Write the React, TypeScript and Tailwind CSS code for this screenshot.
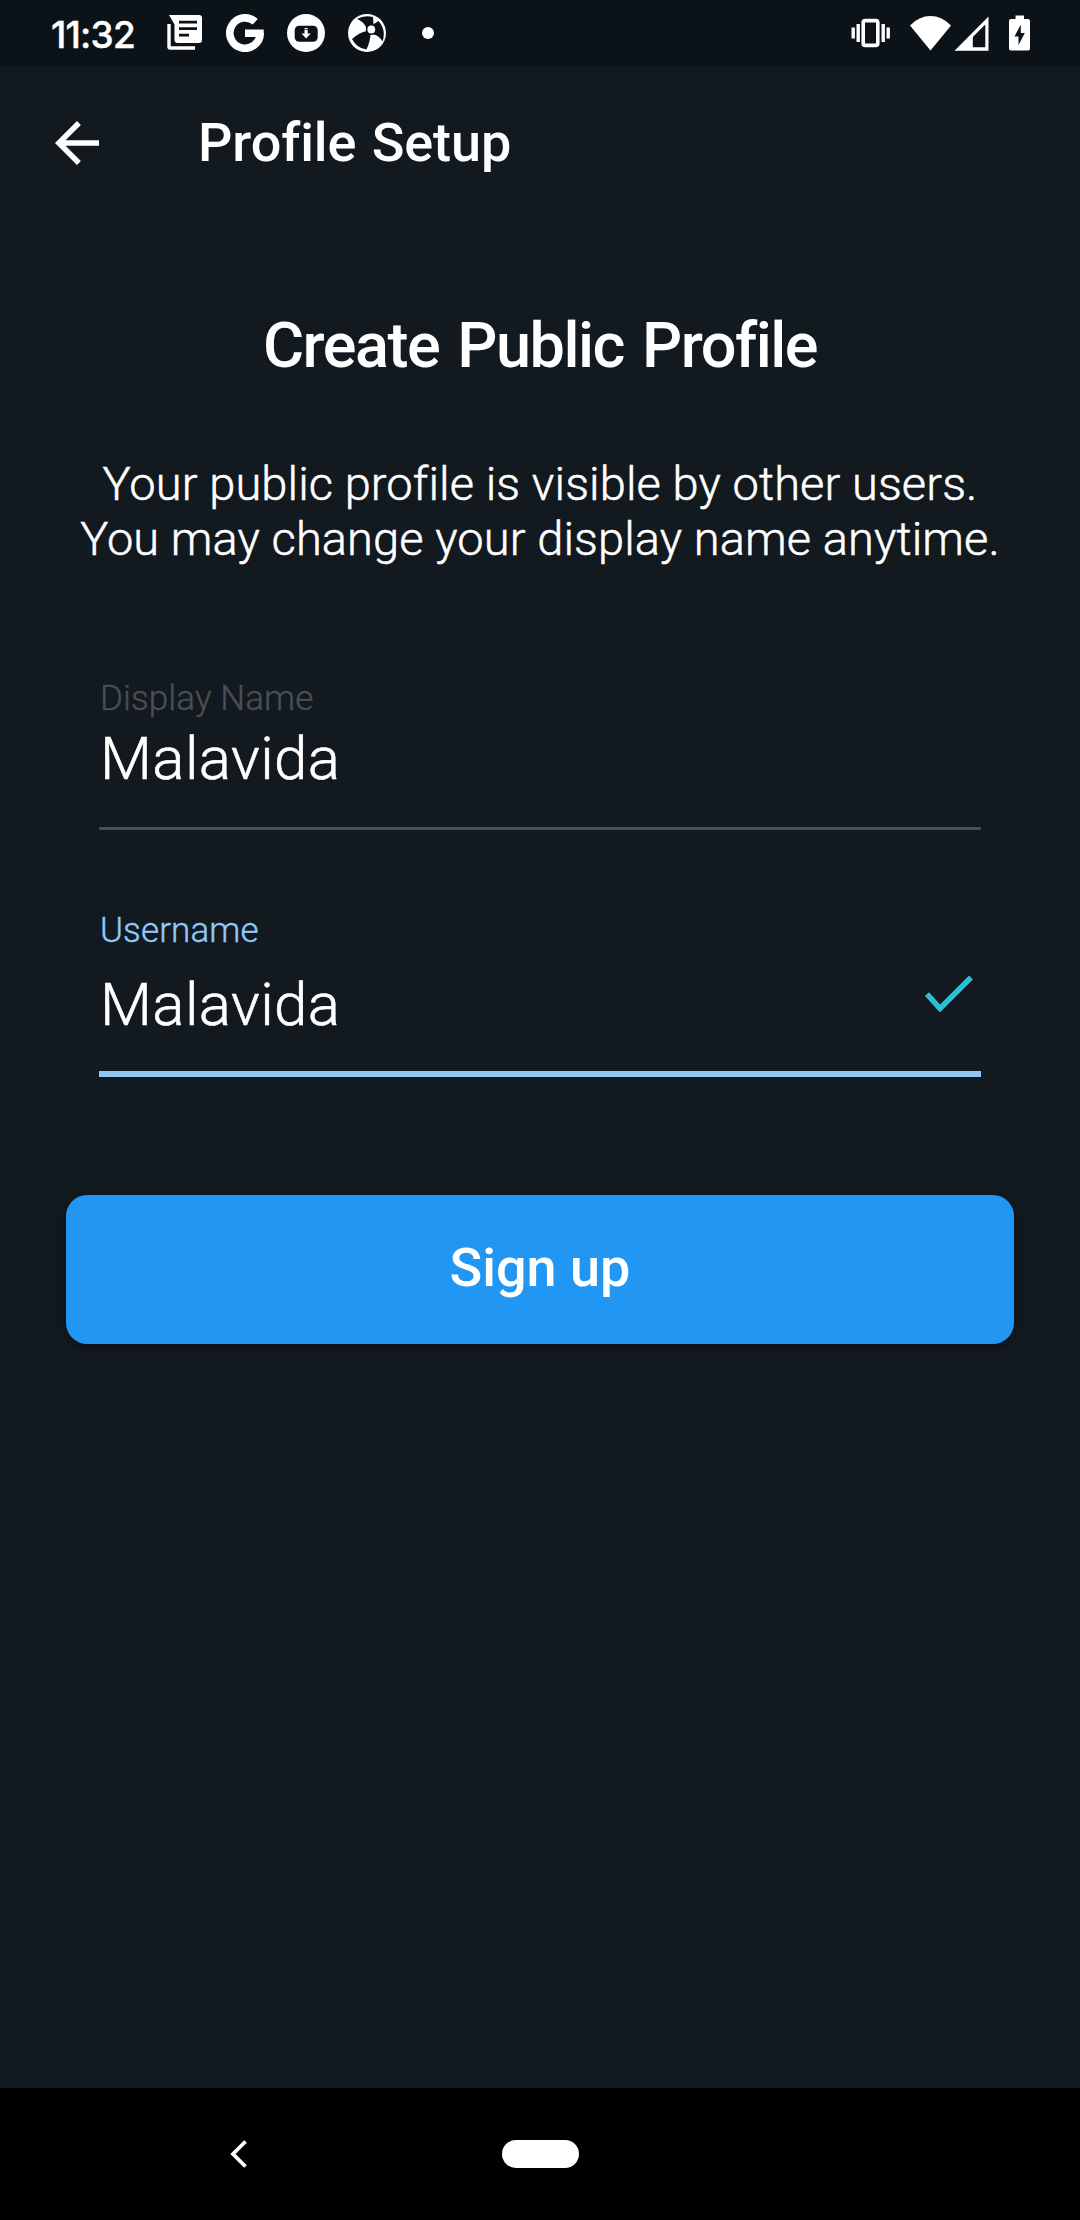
import { ReactNode } from 'react';

interface FieldProps {
  label: string;
  value: string;
  labelClass: string;
  valueClass: string;
  lineClass: string;
  children?: ReactNode;
}

function NewsIcon() {
  return (
    <svg width="36" height="36" viewBox="0 0 36 36" fill="#fff">
      <path d="M2 0H32a3 3 0 0 1 3 3V25a3 3 0 0 1-3 3H10.500a3 3 0 0 1-3-3V9.500Z" />
      <path d="M0.300 9H3.700V31.200H28V34.800H3.300a3 3 0 0 1-3-3Z" />
      <path d="M12 7.200H30M12 13.700H30M12 20.200H22" stroke="#0c1318" strokeWidth="2.800" />
    </svg>
  );
}

function GoogleIcon() {
  return (
    <svg width="38" height="38" viewBox="0 0 38 38" fill="none">
      <path d="M29.200 7.800A15.200 15.200 0 1 0 34.200 19" stroke="#fff" strokeWidth="7.600" />
      <path d="M19 15.500H37.700V20.500L34 23H19Z" fill="#fff" />
    </svg>
  );
}

function DownloadIcon() {
  return (
    <svg width="38" height="38" viewBox="0 0 38 38" fill="#fff">
      <circle cx="19" cy="19" r="19" />
      <rect x="7.700" y="11.800" width="23" height="16" rx="4.500" fill="#0c1318" />
      <path d="M17.500 14h3.200v1.200h-3.200zM17.500 16h3.200v3.600h3l-4.600 5-4.600-5h3z" />
    </svg>
  );
}

function BallIcon() {
  return (
    <svg width="38" height="38" viewBox="0 0 38 38">
      <circle cx="19" cy="19" r="19" fill="#fff" />
      <g fill="#0c1318">
        <path d="M9 5Q16 1 25 3L25.500 10L18.500 14Q15.500 7.500 9 5Z" />
        <path d="M25 10.500L30.500 7Q38.500 16 34.500 27.500Q31.500 22 26 20.500Z" />
        <path d="M22.500 19.500Q22.500 27 18.500 35.500Q9 34.500 4 25Q11 18.500 19 17Z" />
        <circle cx="23.300" cy="15.500" r="5.600" />
      </g>
      <circle cx="23.300" cy="15.500" r="3.900" fill="#fff" />
    </svg>
  );
}

function VibrateIcon() {
  return (
    <svg width="40" height="30" viewBox="0 0 40 30" fill="#fff">
      <rect x="12.200" y="2.600" width="14.600" height="24.800" rx="2" fill="none" stroke="#fff" strokeWidth="3.600" />
      <path d="M0.500 9.500h3.400v11h-3.400zM5.500 6h3.400v18h-3.400zM30.500 6h3.400v18h-3.400zM35.500 9.500h3.400v11h-3.400z" />
    </svg>
  );
}

function WifiIcon() {
  return (
    <svg width="42" height="35" viewBox="0 0 42 35" fill="#fff">
      <path d="M20.500 34.500L0 9.500Q9 0 20.500 0T41 9.500Z" />
    </svg>
  );
}

function SignalIcon() {
  return (
    <svg width="35" height="35" viewBox="0 0 35 35" fill="#fff" fillRule="evenodd">
      <path d="M34.500 0.500V34.800H0.500ZM31.300 8.500L18.800 21V31.300H31.300Z" />
    </svg>
  );
}

function BatteryIcon() {
  return (
    <svg width="22" height="36" viewBox="0 0 22 36" fill="#fff" fillRule="evenodd">
      <path d="M6.500 0.500H15V4H19a2 2 0 0 1 2 2V33.500a2 2 0 0 1-2 2H2a2 2 0 0 1-2-2V6a2 2 0 0 1 2-2H6.500ZM11.800 9.500L5.500 21.500H9.500V30L15.800 18H11.800Z" />
    </svg>
  );
}

function StatusBar() {
  return (
    <div className="flex h-[66px] items-center bg-[#0c1318] pr-[49px] pl-[51px]">
      <span className="w-[116px] pt-[2px] font-['Inter'] text-[37px] leading-none font-medium tracking-[-0.8px] [-webkit-text-stroke:0.4px]">
        11:32
      </span>
      <div className="flex flex-1 items-center">
        <NewsIcon />
        <div className="ml-[23px] flex items-center gap-[23px]">
          <GoogleIcon />
          <DownloadIcon />
          <BallIcon />
        </div>
        <span className="ml-[36px] size-3 rounded-full bg-white" />
      </div>
      <VibrateIcon />
      <div className="ml-[19px] flex items-center gap-[2px]">
        <WifiIcon />
        <SignalIcon />
      </div>
      <div className="ml-[20px]">
        <BatteryIcon />
      </div>
    </div>
  );
}

function Field({ label, value, labelClass, valueClass, lineClass, children }: FieldProps) {
  return (
    <div className="mx-[99px]">
      <p className={`pl-[1px] text-[35px] leading-[40px] font-light tracking-[0.1px] [-webkit-text-stroke:0.4px] ${labelClass}`}>
        {label}
      </p>
      <div className={`flex justify-between ${valueClass}`}>
        <span className="pl-[1px] text-[60px] leading-[72px] font-light tracking-[0.4px] [-webkit-text-stroke:0.6px]">
          {value}
        </span>
        {children}
      </div>
      <div className={lineClass} />
    </div>
  );
}

export default function App() {
  return (
    <div className="flex h-[2220px] w-[1080px] flex-col bg-[#12191f] font-['Roboto',sans-serif] text-white">
      <StatusBar />

      {/* App bar */}
      <header className="flex h-[154px] items-center pl-[44px]">
        <svg width="66" height="66" viewBox="0 0 24 24" fill="#fff">
          <path d="M20 11H7.830l5.590-5.590L12 4l-8 8 8 8 1.410-1.410L7.830 13H20v-2z" />
        </svg>
        <span className="ml-[88px] text-[54px] leading-none font-medium tracking-[-0.1px] [word-spacing:2px]">
          Profile Setup
        </span>
      </header>

      <main className="flex-1">
        <h1 className="mt-[86px] text-center text-[63px] leading-[80px] font-medium tracking-[-1.5px] [word-spacing:4px]">
          Create Public Profile
        </h1>
        <p className="mt-[70px] text-center text-[47px] leading-[55px] font-light tracking-[0.1px] whitespace-nowrap [-webkit-text-stroke:0.5px]">
          Your public profile is visible by other users.
          <br />
          You may change your display name anytime.
        </p>

        <div className="mt-[113px]">
          <Field
            label="Display Name"
            value="Malavida"
            labelClass="text-[#494f55]"
            valueClass="mt-[4px] h-[104px]"
            lineClass="h-[3px] bg-[#494f55]"
          />
        </div>

        <div className="mt-[81px]">
          <Field
            label="Username"
            value="Malavida"
            labelClass="text-[#90caf9]"
            valueClass="mt-[18px] h-[102px]"
            lineClass="h-[6px] bg-[#93c7f3]"
          >
            <svg className="mt-[6px] mr-[8px]" width="48" height="38" viewBox="0 0 48 38" fill="none">
              <path d="M2 19L15 33.500L46 2.500" stroke="#2fbfd4" strokeWidth="5.500" />
            </svg>
          </Field>
        </div>

        <button className="mx-[66px] mt-[118px] flex h-[149px] w-[948px] items-center justify-center rounded-[21px] bg-[#2196f3] pb-[3px] text-[54px] leading-none font-medium shadow-[0_4px_8px_rgba(0,0,0,0.35)]">
          Sign up
        </button>
      </main>

      {/* System navigation */}
      <nav className="flex h-[132px] items-center bg-black pl-[230px]">
        <svg width="18" height="28" viewBox="0 0 18 28" fill="none">
          <path d="M15.500 1.500L3 14L15.500 26.500" stroke="#fff" strokeWidth="3.800" />
        </svg>
        <span className="ml-[254px] h-[28px] w-[77px] rounded-full bg-white" />
      </nav>
    </div>
  );
}
